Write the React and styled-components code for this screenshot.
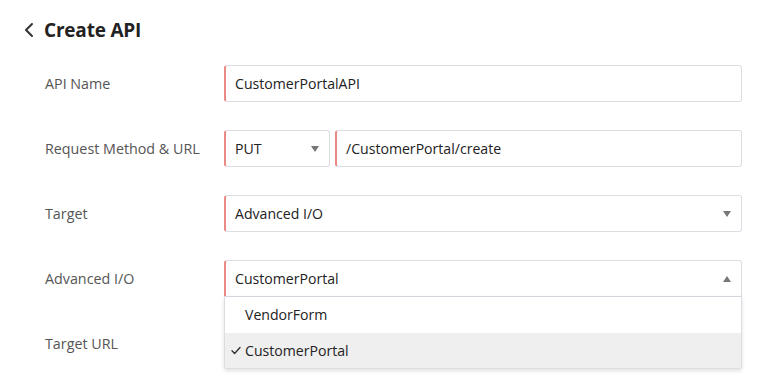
import React from "react";
import styled, { createGlobalStyle } from "styled-components";

const GlobalStyle = createGlobalStyle`
  html, body {
    margin: 0;
    padding: 0;
    background: #fff;
    font-family: "Open Sans", "Liberation Sans", sans-serif;
    overflow: hidden;
  }
`;

const Page = styled.div`
  width: 784px;
  height: 381px;
  padding: 17px 0 0 0;
  box-sizing: border-box;
`;

const Header = styled.div`
  display: flex;
  align-items: center;
  gap: 9px;
  padding-left: 22px;
  height: 26px;
`;

const Back = styled.button`
  border: none;
  background: none;
  padding: 0;
  width: 13px;
  height: 20px;
  display: flex;
  align-items: center;
  justify-content: center;
  color: #333;
`;

const Title = styled.h1`
  margin: 0;
  font-size: 19px;
  font-weight: 700;
  color: #222;
  letter-spacing: -0.2px;
`;

const Form = styled.div`
  display: flex;
  flex-direction: column;
  gap: 28px;
  padding: 22px 42px 0 45px;
`;

const Row = styled.div`
  display: grid;
  grid-template-columns: 179px 1fr;
  align-items: center;
`;

const Label = styled.label`
  font-size: 14.3px;
  color: #555;
  margin-top: -1px;
`;

const Controls = styled.div`
  display: flex;
  gap: 5px;
  position: relative;
`;

const Field = styled.div`
  flex: ${({ $w }) => ($w ? `0 0 ${$w}px` : "1")};
  height: 37px;
  box-sizing: border-box;
  display: flex;
  align-items: center;
  justify-content: space-between;
  padding: 0 10px 0 9px;
  border: 1px solid #dcdde3;
  border-left: 2px solid #ea8a86;
  border-radius: 3px;
  background: #fff;
  font-size: 14.1px;
  color: #222;
  ${({ $open }) => $open && "border-bottom-left-radius: 0; border-bottom-right-radius: 0;"}
`;

const Caret = styled.span`
  width: 0;
  height: 0;
  border-left: 4.5px solid transparent;
  border-right: 4.5px solid transparent;
  ${({ $up }) =>
    $up ? "border-bottom: 6px solid #777;" : "border-top: 6px solid #777;"}
`;

const Menu = styled.ul`
  position: absolute;
  top: 36px;
  left: 0;
  right: 0;
  margin: 0;
  padding: 0;
  list-style: none;
  background: #fff;
  border: 1px solid #dcdde3;
  border-top: 1px solid #d4d6dd;
  border-radius: 0 0 3px 3px;
  box-shadow: 0 2px 4px rgba(0, 0, 0, 0.12);
  z-index: 2;
  overflow: hidden;
`;

const Option = styled.li`
  height: 35.5px;
  display: flex;
  align-items: center;
  padding-left: 6px;
  font-size: 14.1px;
  color: #222;
  background: ${({ $selected }) => ($selected ? "#efefef" : "#fff")};
`;

const Check = styled.span`
  width: 14px;
  display: inline-flex;
  justify-content: flex-start;
`;

const ChevronLeft = () => (
  <svg width="10" height="16" viewBox="0 0 10 16" fill="none">
    <path d="M8 2L2 8l6 6" stroke="#333" strokeWidth="2" strokeLinecap="round" strokeLinejoin="round" />
  </svg>
);

const CheckMark = () => (
  <svg width="10" height="9" viewBox="0 0 10 9" fill="none">
    <path d="M1 4.8l2.6 2.6L9 1.6" stroke="#333" strokeWidth="1.4" strokeLinecap="round" strokeLinejoin="round" />
  </svg>
);

export default function App() {
  return (
    <Page>
      <GlobalStyle />
      <Header>
        <Back>
          <ChevronLeft />
        </Back>
        <Title>Create API</Title>
      </Header>
      <Form>
        <Row>
          <Label>API Name</Label>
          <Controls>
            <Field>CustomerPortalAPI</Field>
          </Controls>
        </Row>
        <Row>
          <Label>Request Method &amp; URL</Label>
          <Controls>
            <Field $w={106}>
              PUT
              <Caret />
            </Field>
            <Field>/CustomerPortal/create</Field>
          </Controls>
        </Row>
        <Row>
          <Label>Target</Label>
          <Controls>
            <Field>
              Advanced I/O
              <Caret />
            </Field>
          </Controls>
        </Row>
        <Row>
          <Label>Advanced I/O</Label>
          <Controls>
            <Field $open>
              CustomerPortal
              <Caret $up />
            </Field>
            <Menu>
              <Option>
                <Check />
                VendorForm
              </Option>
              <Option $selected>
                <Check>
                  <CheckMark />
                </Check>
                CustomerPortal
              </Option>
            </Menu>
          </Controls>
        </Row>
        <Row>
          <Label>Target URL</Label>
          <Controls>
            <Field>&nbsp;</Field>
          </Controls>
        </Row>
      </Form>
    </Page>
  );
}
